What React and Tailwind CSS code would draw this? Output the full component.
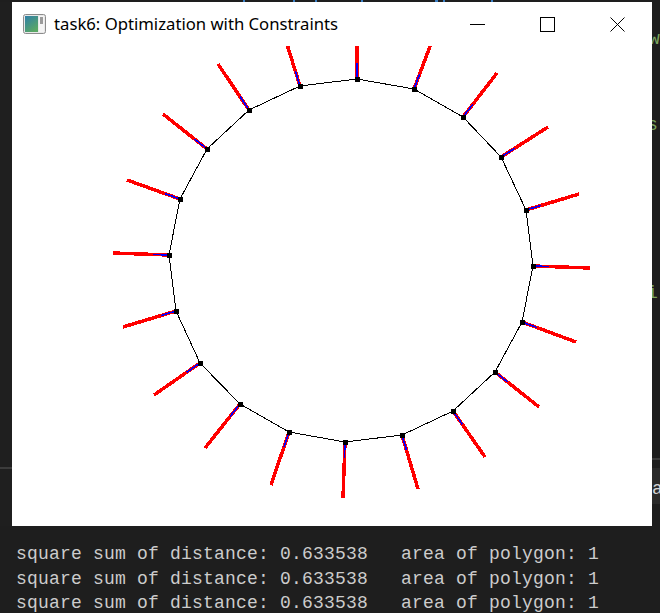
import React from "react";

const V = [[357,80],[414,90],[463,118],[501,158],[526,211],[533,267],[522,323],[495,373],[453,412],[402,436],[345,443],[289,433],[240,405],[200,364],[176,312],[169,256],[180,200],[207,150],[249,111],[300,87]];
const E = [[357,40],[432,42],[497,74],[548,128],[579,195],[590,269],[576,343],[539,408],[485,458],[418,490],[343,499],[271,486],[205,449],[154,396],[123,328],[113,254],[127,181],[163,115],[218,65],[286,42]];

function Drawing() {
  const pts = V.map((p) => p.join(",")).join(" ");
  return (
    <svg width="640" height="480" viewBox="12 47 640 480" className="block" shapeRendering="crispEdges">
      {V.map((v, i) => {
        const e = E[i];
        const dx = e[0] - v[0];
        const dy = e[1] - v[1];
        const l = Math.hypot(dx, dy);
        const bx = v[0] + (dx / l) * 16;
        const by = v[1] + (dy / l) * 16;
        return (
          <g key={i}>
            <line x1={v[0]} y1={v[1]} x2={e[0]} y2={e[1]} stroke="#ff0000" strokeWidth="3.5" />
            <line x1={v[0]} y1={v[1]} x2={bx} y2={by} stroke="#0000ff" strokeWidth="1.6" />
          </g>
        );
      })}
      <polygon points={pts} fill="none" stroke="#000" strokeWidth="1" />
      {V.map((v, i) => (
        <rect key={i} x={v[0] - 2.5} y={v[1] - 2.5} width="5" height="5" fill="#000" />
      ))}
    </svg>
  );
}

function AppIcon() {
  return (
    <svg width="23" height="20" viewBox="0 0 23 20">
      <defs>
        <linearGradient id="ig" x1="0" y1="0" x2="0.6" y2="1">
          <stop offset="0" stopColor="#2f7fa8" />
          <stop offset="1" stopColor="#5aa865" />
        </linearGradient>
      </defs>
      <rect x="0.5" y="0.5" width="22" height="19" rx="2" fill="#e8e8e8" stroke="#8c8c8c" />
      <rect x="2" y="2" width="13" height="16" fill="url(#ig)" />
      <rect x="16" y="2" width="5" height="16" fill="#f4f4f4" />
      <rect x="17" y="3" width="3" height="7" fill="#9a9a9a" />
    </svg>
  );
}

function Line() {
  return (
    <div className="whitespace-pre">square sum of distance: 0.633538   area of polygon: 1</div>
  );
}

export default function App() {
  return (
    <div className="w-[660px] h-[613px] bg-[#1e1e1e] overflow-hidden flex flex-col">
      <div className="h-[3px] flex relative">
        <span className="ml-[243px] w-[2px] h-[2px] bg-[#3b7fc4]" />
        <span className="ml-[48px] w-[2px] h-[2px] bg-[#3b7fc4]" />
        <span className="ml-[20px] w-[2px] h-[2px] bg-[#3b7fc4]" />
        <span className="ml-[44px] w-[2px] h-[2px] bg-[#3b7fc4]" />
        <span className="ml-[72px] w-[3px] h-[2px] bg-[#3b7fc4]" />
        <span className="ml-[5px] w-[2px] h-[2px] bg-[#3b7fc4]" />
        <span className="ml-[46px] w-[2px] h-[2px] bg-[#3b7fc4]" />
      </div>
      <div className="flex h-[524px]">
        <div className="w-[12px] flex flex-col bg-[#1f1f1f]">
          <div className="h-[465px]" />
          <div className="h-[2px] bg-[#3c3c3c]" />
        </div>
        <div className="w-[640px] h-[524px] bg-white flex flex-col">
          <div className="h-[44px] flex items-center">
            <div className="ml-[11px] w-[23px] h-[20px] flex">
              <AppIcon />
            </div>
            <div className="ml-[8px] text-[16.7px] text-black font-['Segoe_UI','Noto_Sans',sans-serif] whitespace-nowrap">
              task6: Optimization with Constraints
            </div>
            <div className="ml-auto flex h-full">
              <div className="w-[70px] h-full flex items-center justify-center">
                <div className="w-[15px] h-[1px] bg-black" />
              </div>
              <div className="w-[70px] h-full flex items-center justify-center">
                <div className="w-[15px] h-[15px] border border-black" />
              </div>
              <div className="w-[70px] h-full flex items-center justify-center">
                <svg width="15" height="15" viewBox="0 0 15 15">
                  <path d="M0.5 0.5 L14.5 14.5 M14.5 0.5 L0.5 14.5" stroke="#000" strokeWidth="1" />
                </svg>
              </div>
            </div>
          </div>
          <Drawing />
        </div>
        <div className="w-[8px] flex flex-col overflow-hidden font-['Liberation_Mono',monospace] text-[18px] leading-[18px] text-[#7ca65f] bg-[#1e1e1e]">
          <div className="mt-[28px] -ml-[3px] whitespace-pre">w</div>
          <div className="mt-[68px] -ml-[5px] whitespace-pre">s</div>
          <div className="mt-[150px] -ml-[5px] whitespace-pre">i</div>
          <div className="mt-[156px] h-[2px] bg-[#3c3c3c] shrink-0" />
          <div className="mt-[8px] h-[36px] shrink-0 bg-[#2a2a2a] text-[#d4d4d4] pt-[12px] whitespace-pre">a</div>
        </div>
      </div>
      <div className="pt-[16px] pl-[16px] font-['Liberation_Mono',monospace] text-[18px] leading-[24.5px] tracking-[0.2px] text-[#cccccc]">
        <Line />
        <Line />
        <Line />
      </div>
    </div>
  );
}
